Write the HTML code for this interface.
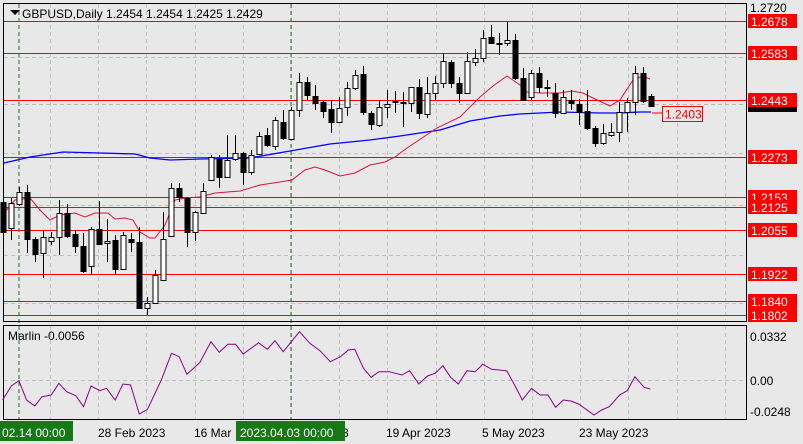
<!DOCTYPE html>
<html><head><meta charset="utf-8"><style>
html,body{margin:0;padding:0;background:#e8e8e8;width:803px;height:444px;overflow:hidden}
svg{display:block;font-family:"Liberation Sans",sans-serif}
</style></head><body>
<svg id="s" width="803" height="444" xmlns="http://www.w3.org/2000/svg">
<rect width="803" height="444" fill="#e8e8e8"/>
<g id="grid"></g>
<g id="lv"></g>
<line x1="19" y1="4" x2="19" y2="420" stroke="#1a7a1a" stroke-dasharray="4,3"/>
<line x1="291" y1="4" x2="291" y2="420" stroke="#1a7a1a" stroke-dasharray="4,3"/>
<line x1="4" y1="104.5" x2="746" y2="104.5" stroke="#b8b8b8" stroke-dasharray="4,3"/>
<polyline id="blue" fill="none" stroke="#0000ff" stroke-width="1.3"/>
<polyline id="red" fill="none" stroke="#e0103a" stroke-width="1"/>
<g id="cd"></g>
<line x1="652" y1="113" x2="662" y2="113" stroke="#ff0000"/>
<rect x="662.5" y="106.5" width="40" height="15" fill="#e8e8e8" stroke="#ff0000"/>
<text x="665" y="118.5" font-size="12" fill="#ff0000">1.2403</text>
<rect x="3.5" y="3.5" width="743" height="318" fill="none" stroke="#000"/>
<rect x="3.5" y="325.5" width="743" height="94" fill="none" stroke="#000"/>
<line x1="4" y1="380.5" x2="746" y2="380.5" stroke="#c0c0c0" stroke-dasharray="4,3"/>
<polyline id="marlin" fill="none" stroke="#8b008b" stroke-width="1"/>
<path d="M10 10 L20 10 L15 15 Z" fill="#000"/>
<text x="22" y="18" font-size="12" fill="#000">GBPUSD,Daily  1.2454 1.2454 1.2425 1.2429</text>
<text x="8" y="340" font-size="12" fill="#000">Marlin -0.0056</text>
<rect x="748" y="106" width="49" height="6" fill="#000"/>
<g id="ax"></g>
<text x="750" y="12" font-size="12" fill="#000">1.2720</text>
<text x="750" y="341" font-size="12" fill="#000">0.0332</text>
<text x="750" y="385" font-size="12" fill="#000">0.00</text>
<text x="750" y="416" font-size="12" fill="#000">-0.0248</text>
<rect x="0" y="421" width="73" height="20" fill="#157a15"/>
<text x="2" y="437" font-size="12" fill="#fff">02.14 00:00</text>
<text x="98" y="437" font-size="12" fill="#000">28 Feb 2023</text>
<text x="194" y="437" font-size="12" fill="#000">16 Mar</text>
<text x="342" y="437" font-size="12" fill="#000">3</text>
<rect x="236" y="421" width="109" height="20" fill="#157a15"/>
<text x="240" y="437" font-size="12" fill="#fff">2023.04.03 00:00</text>
<text x="386" y="437" font-size="12" fill="#000">19 Apr 2023</text>
<text x="482" y="437" font-size="12" fill="#000">5 May 2023</text>
<text x="579" y="437" font-size="12" fill="#000">23 May 2023</text>
</svg>
<script>
var NS="http://www.w3.org/2000/svg";
function el(p,t,a){var e=document.createElementNS(NS,t);for(var k in a)e.setAttribute(k,a[k]);document.getElementById(p).appendChild(e);return e;}
for(var x=50;x<746;x+=48.2){var xx=Math.round(x)+.5;el("grid","line",{x1:xx,y1:4,x2:xx,y2:321,stroke:"#c0c0c0","stroke-dasharray":"4,3"});el("grid","line",{x1:xx,y1:326,x2:xx,y2:419,stroke:"#c0c0c0","stroke-dasharray":"4,3"});}
[57,153,205,255,303].forEach(function(y){el("grid","line",{x1:4,y1:y+.5,x2:746,y2:y+.5,stroke:"#c0c0c0","stroke-dasharray":"4,3"});});
var L=[["1.2678",21],["1.2583",53],["1.2443",100],["1.2273",157],["1.2153",197],["1.2125",207],["1.2055",230],["1.1922",274],["1.1840",301],["1.1802",315]];
L.forEach(function(l){el("lv","line",{x1:4,y1:l[1]+.5,x2:746,y2:l[1]+.5,stroke:"#ff0000"});});
L.forEach(function(l){el("ax","rect",{x:748,y:l[1]-7,width:49,height:14,fill:"#ff0000"});var t=el("ax","text",{x:751,y:l[1]+5,"font-size":12,fill:"#fff"});t.textContent=l[0];});
var C=[[202,232,198,240],[228,203,198,240],[204,192,187,206],[192,239,185,253],[239,254,237,262],[253,237,230,278],[241,237,232,245],[237,213,200,255],[213,236,204,238],[234,246,230,253],[246,271,233,273],[266,229,227,275],[229,244,201,245],[243,241,219,262],[240,269,235,275],[269,235,232,270],[239,242,233,252],[242,308,227,309],[308,303,297,315],[303,275,270,304],[280,239,212,281],[236,188,183,237],[188,197,183,202],[198,232,197,247],[232,212,211,241],[213,191,183,214],
[180,157,155,181],[159,177,155,188],[177,160,135,178],[159,153,135,161],[153,172,152,185],[172,155,150,175],[154,136,132,155],[135,145,128,147],[146,120,117,150],[122,138,110,140],[139,110,107,140],[110,82,73,117],[82,95,77,100],[96,103,85,110],[102,111,100,118],[109,122,100,133],[122,108,97,123],[107,88,82,116],[88,75,70,90],[74,112,66,115],[113,124,111,130],[125,107,100,127],[107,104,90,118],[101,102,91,113],
[102,102.5,92,127],[103,87,87,112],[87,113,79,119],[114,93,77,118],[93,83,76,100],[83,61,53,88],[62,83,60,88],[83,93,77,103],[93,61,52,94],[62,58,49,66],[58,38,30,62],[37,43,25,44],[43,43.5,33,55],[43,40,22,46],[40,78,34,80],[78,100,68,101],[97,73,70,100],[73,87,67,93],[87,87.5,80,97],[93,113,83,118],[113,97,90,114],[100,103,90,110],[104,112,99,125],[111,128,90,130],[128,143,126,147],[143,133,124,145],[135,132,123,137],[132,112,102,142],[112,102,98,132],[102,73,66,115],[73,101,67,103],[96,106,94,107]];
C.forEach(function(c,i){var x=3+8*i;el("cd","line",{x1:x+.5,y1:c[2],x2:x+.5,y2:c[3],stroke:"#000"});var t=Math.min(c[0],c[1]),h=Math.max(Math.abs(c[0]-c[1]),1);var bull=c[1]<c[0];el("cd","rect",{x:x-2,y:t+.5,width:5,height:h,fill:bull?"#fff":"#000",stroke:"#000"});});
function pl(id,p){document.getElementById(id).setAttribute("points",p.map(function(a){return a.join(",")}).join(" "));}
pl("blue",[[4,163],[30,157],[63,152],[100,153],[135,154],[150,158],[170,160],[200,159],[250,158],[290,151],[330,144],[370,140],[400,136],[420,133],[440,130],[470,121],[500,116],[520,114],[560,112],[600,113],[620,113],[640,112],[651,112]]);
pl("red",[[4,213],[15,200],[30,198],[40,210],[50,220],[60,215],[75,213],[85,217],[95,213],[108,213],[115,219],[125,218],[133,220],[140,232],[150,238],[155,238],[165,225],[175,200],[185,198],[200,197],[215,193],[240,191],[260,185],[280,182],[292,180],[305,170],[315,167],[325,170],[340,176],[355,173],[370,165],[385,162],[395,157],[407,148],[437,128],[460,117],[480,97],[493,86],[507,76],[520,85],[527,92],[540,93],[560,93],[572,91],[583,93],[593,98],[610,106],[620,100],[633,80],[643,76],[650,79]]);
var M=[[5,300],[22,258],[37,242],[52,300],[68,318],[82,290],[100,285],[115,250],[130,275],[148,287],[163,320],[178,258],[195,272],[208,265],[225,300],[240,252],[255,255],[272,342],[288,328],[315,240],[335,160],[350,170],[365,223],[390,188],[412,125],[428,157],[445,133],[460,133],[475,162],[505,128],[522,148],[537,122],[553,155],[585,95],[605,130],[625,152],[645,185],[665,170],[680,150],[693,148],[710,205],[725,232],[740,215],[760,215],[785,225],[800,212],[818,252],[835,228],[850,220],[865,197],[880,232],[895,252],[912,212],[928,215],[943,193],[960,208],[975,210],[990,213],[1005,255],[1020,300],[1038,265],[1055,285],[1070,285],[1085,322],[1100,300],[1115,303],[1130,312],[1160,345],[1175,330],[1190,320],[1210,285],[1225,272],[1240,230],[1258,262],[1270,267]];
pl("marlin",M.map(function(a){return [(a[0]/1.953).toFixed(1),(300+a[1]/3).toFixed(1)];}));
</script>
</body></html>
